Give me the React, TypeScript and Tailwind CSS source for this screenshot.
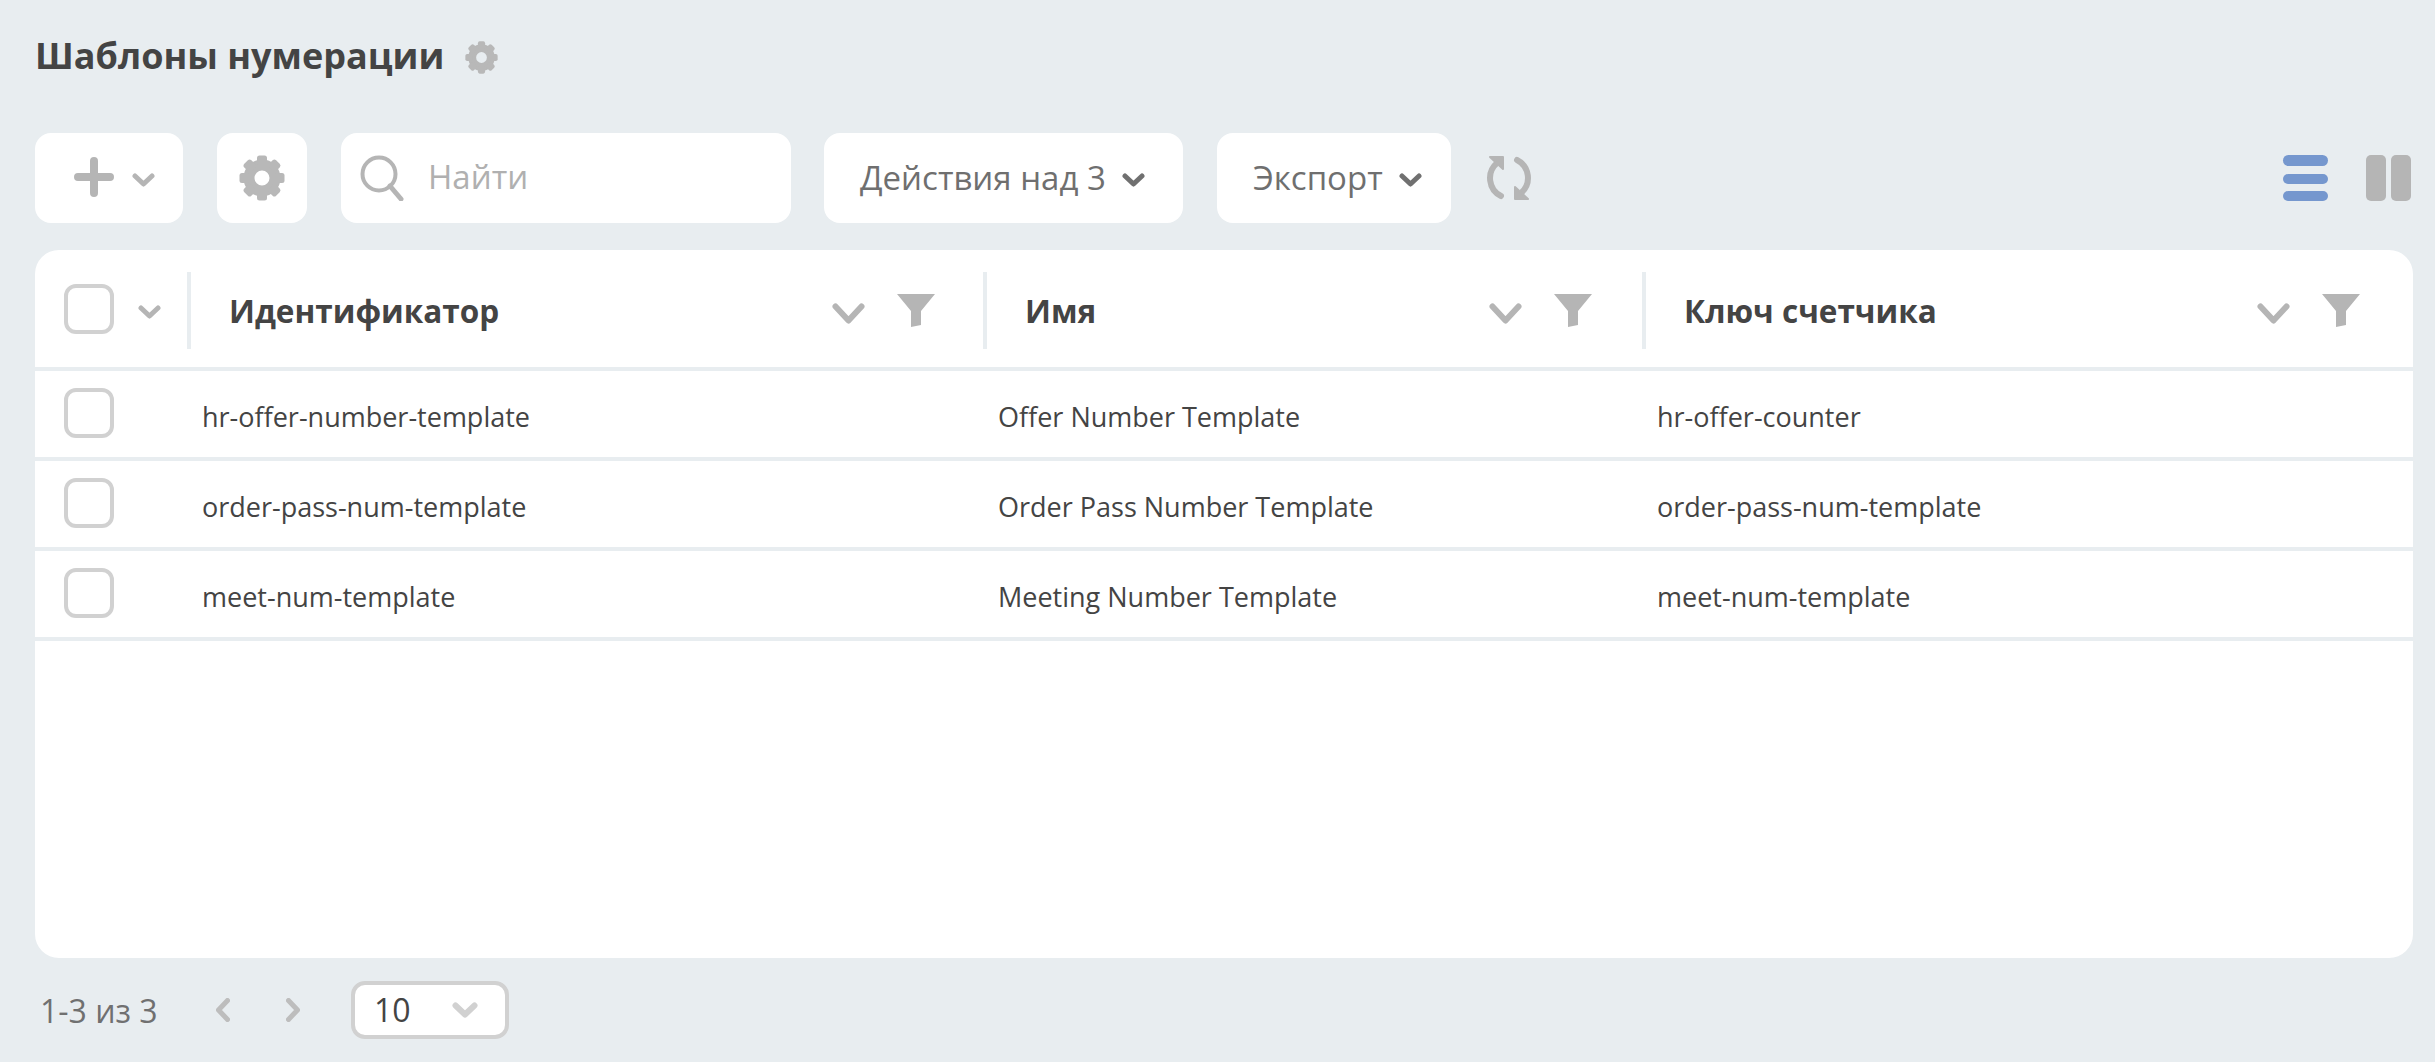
const Gear = ({ size, className = "" }: { size: number; className?: string }) => (
  <svg width={size} height={size} viewBox="0 0 46 46" className={className}>
    <circle cx="23" cy="23" r="13" fill="none" stroke="#b8b8b8" strokeWidth="11" />
    {[0, 45, 90, 135, 180, 225, 270, 315].map((a) => (
      <rect key={a} x="18" y="0.5" width="10" height="10" rx="2.5" fill="#b8b8b8" transform={`rotate(${a} 23 23)`} />
    ))}
  </svg>
);

const Chevron = ({ w, h, sw, color = "#b5b5b5", className = "" }: { w: number; h: number; sw: number; color?: string; className?: string }) => (
  <svg width={w} height={h} viewBox={`0 0 ${w} ${h}`} className={className}>
    <path d={`M${sw / 2 + 0.5} ${sw / 2 + 0.5} L${w / 2} ${h - sw / 2 - 0.5} L${w - sw / 2 - 0.5} ${sw / 2 + 0.5}`} fill="none" stroke={color} strokeWidth={sw} strokeLinecap="round" strokeLinejoin="round" />
  </svg>
);

const Funnel = () => (
  <svg width="38" height="33" viewBox="0 0 38 33">
    <path d="M0 0H38L24 17V31L14 33V17Z" fill="#b5b5b5" />
  </svg>
);

const Checkbox = () => <div className="h-[50px] w-[50px] rounded-[12px] border-[4px] border-[#d1d1d1] bg-white" />;

const ToolbarButton = ({ label, className }: { label: string; className: string }) => (
  <div className={`flex h-[90px] items-center rounded-[16px] bg-white pl-[36px] text-[33px] text-[#6f6f6f] ${className}`}>
    <span>{label}</span>
    <Chevron w={23} h={14} sw={5} color="#707070" className="ml-[16px] mt-[3px]" />
  </div>
);

const HeaderCell = ({ label, endGap }: { label: string; endGap: number }) => (
  <div className="flex h-[117px] items-center pt-[4px]">
    <div className="h-[77px] w-[4px] shrink-0 bg-[#e8edf0]" />
    <span className="ml-[38px] mt-[1px] flex-1 text-[31.5px] font-bold text-[#444444]">{label}</span>
    <Chevron w={33} h={21} sw={6} className="mt-[5px]" />
    <div className="ml-[32px]" style={{ marginRight: endGap }}>
      <Funnel />
    </div>
  </div>
);

const rows = [
  ["hr-offer-number-template", "Offer Number Template", "hr-offer-counter"],
  ["order-pass-num-template", "Order Pass Number Template", "order-pass-num-template"],
  ["meet-num-template", "Meeting Number Template", "meet-num-template"],
];

const gridCols = "grid grid-cols-[152px_796px_659px_1fr]";

export default function App() {
  return (
    <div className="flex h-[1062px] w-[2435px] flex-col overflow-hidden bg-[#e8edf0] pl-[35px] pr-[22px] font-['Open_Sans',sans-serif]">
      <div className="flex h-[133px] items-start pt-[31px]">
        <h1 className="text-[36px] leading-[50px] font-bold text-[#444444]">Шаблоны нумерации</h1>
        <Gear size={33} className="ml-[21px] mt-[10px]" />
      </div>

      <div className="flex h-[90px] items-center">
        <div className="flex h-[90px] w-[148px] items-center rounded-[16px] bg-white pl-[39px]">
          <svg width="40" height="40" viewBox="0 0 40 40" className="mb-[2px]">
            <path d="M20 4V36M4 20H36" stroke="#b5b5b5" strokeWidth="8" strokeLinecap="round" />
          </svg>
          <Chevron w={23} h={14} sw={5} className="ml-[18px] mt-[4px]" />
        </div>
        <div className="ml-[34px] flex h-[90px] w-[90px] items-center justify-center rounded-[16px] bg-white">
          <Gear size={46} />
        </div>
        <div className="ml-[34px] flex h-[90px] w-[450px] items-center rounded-[16px] bg-white pl-[19px]">
          <svg width="44" height="46" viewBox="0 0 44 46">
            <circle cx="19" cy="19" r="16.5" fill="none" stroke="#b5b5b5" strokeWidth="4" />
            <path d="M30 31L41 44" stroke="#b5b5b5" strokeWidth="5" strokeLinecap="round" />
          </svg>
          <span className="ml-[24px] mb-[3px] text-[33px] text-[#b0b0b0]">Найти</span>
        </div>
        <ToolbarButton label="Действия над 3" className="ml-[33px] w-[359px]" />
        <ToolbarButton label="Экспорт" className="ml-[34px] w-[234px]" />
        <svg width="46" height="46" viewBox="0 0 46 46" className="ml-[35px]">
          <path d="M11 8A20 20 0 0 0 15 41" fill="none" stroke="#b5b5b5" strokeWidth="6" strokeLinecap="round" />
          <path d="M31 5A20 20 0 0 1 35 38" fill="none" stroke="#b5b5b5" strokeWidth="6" strokeLinecap="round" />
          <path d="M4 2H17V14Z" fill="#b5b5b5" stroke="#b5b5b5" strokeWidth="2" strokeLinejoin="round" />
          <path d="M42 44H29V32Z" fill="#b5b5b5" stroke="#b5b5b5" strokeWidth="2" strokeLinejoin="round" />
        </svg>
        <div className="ml-auto mr-[2px] flex items-center">
          <div className="flex h-[46px] w-[45px] flex-col justify-between">
            <div className="h-[11px] rounded-full bg-[#7597ce]" />
            <div className="h-[10px] rounded-full bg-[#7597ce]" />
            <div className="h-[10px] rounded-full bg-[#7597ce]" />
          </div>
          <div className="ml-[38px] flex h-[46px] gap-[5px]">
            <div className="w-[20px] rounded-[5px] bg-[#b5b5b5]" />
            <div className="w-[20px] rounded-[5px] bg-[#b5b5b5]" />
          </div>
        </div>
      </div>

      <div className="mt-[27px] h-[708px] overflow-hidden rounded-[24px] bg-white">
        <div className={`${gridCols} border-b-[4px] border-[#e8edf0]`}>
          <div className="flex h-[117px] items-center pl-[29px]">
            <Checkbox />
            <Chevron w={23} h={14} sw={5} className="ml-[24px] mt-[7px]" />
          </div>
          <HeaderCell label="Идентификатор" endGap={48} />
          <HeaderCell label="Имя" endGap={50} />
          <HeaderCell label="Ключ счетчика" endGap={53} />
        </div>
        {rows.map((r) => (
          <div key={r[0]} className={`${gridCols} h-[90px] items-center border-b-[4px] border-[#e8edf0] text-[27px] text-[#444444]`}>
            <div className="pl-[29px] pb-[2px]">
              <Checkbox />
            </div>
            <div className="pl-[15px] pt-[6px]">{r[0]}</div>
            <div className="pl-[15px] pt-[6px]">{r[1]}</div>
            <div className="pl-[15px] pt-[6px]">{r[2]}</div>
          </div>
        ))}
      </div>

      <div className="mt-[23px] flex items-center pl-[5px]">
        <span className="mt-[2px] w-[118px] text-[32px] whitespace-nowrap text-[#707070]">1-3 из 3</span>
        <svg width="14" height="24" viewBox="0 0 14 24" className="ml-[58px]">
          <path d="M11.5 2.5L2.5 12L11.5 21.5" fill="none" stroke="#bdbdbd" strokeWidth="5" strokeLinecap="round" strokeLinejoin="round" />
        </svg>
        <svg width="14" height="24" viewBox="0 0 14 24" className="ml-[56px]">
          <path d="M2.5 2.5L11.5 12L2.5 21.5" fill="none" stroke="#bdbdbd" strokeWidth="5" strokeLinecap="round" strokeLinejoin="round" />
        </svg>
        <div className="ml-[51px] flex h-[58px] w-[158px] items-center justify-between rounded-[14px] border-[4px] border-[#d1d1d1] bg-white pl-[19px] pr-[27px] text-[32px] text-[#444444]">
          <span>10</span>
          <Chevron w={26} h={16} sw={6} color="#d1d1d1" />
        </div>
      </div>
    </div>
  );
}
